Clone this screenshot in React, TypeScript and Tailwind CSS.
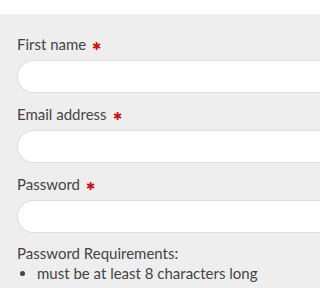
export default function App() {
  const fields = ['First name', 'Email address', 'Password'];
  return (
    <div className="min-h-screen w-full overflow-hidden bg-white pt-[14px] font-['Lato',sans-serif] text-[#444444]">
      <div className="bg-[#eeeeee] pl-[17px] pt-[21px] pb-4">
        <div className="flex flex-col gap-[12px]">
          {fields.map((label) => (
            <div key={label}>
              <label className="flex items-center text-[15px] leading-[18px]">
                {label}
                <span className="ml-[6px] mt-[2px] text-[11px] leading-none text-[#cc1111]">✱</span>
              </label>
              <div className="mt-[7px] h-[33px] rounded-l-full border border-r-0 border-[#dddddd] bg-white" />
            </div>
          ))}
        </div>
        <p className="mt-[10px] text-[15px] leading-[20px]">Password Requirements:</p>
        <ul className="list-disc pl-[20px] text-[15px] leading-[20px]">
          <li>must be at least 8 characters long</li>
        </ul>
      </div>
    </div>
  );
}
